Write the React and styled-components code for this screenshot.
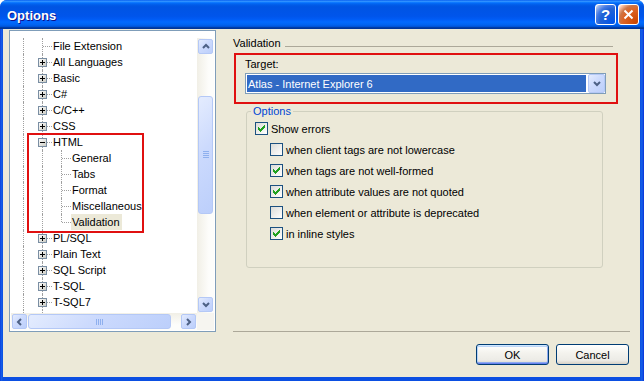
import React from 'react';
import styled, {createGlobalStyle} from 'styled-components';

const GlobalStyle = createGlobalStyle`
  html, body {
    margin: 0;
    padding: 0;
    background: #ffffff;
  }
  body {
    font-family: "Liberation Sans", Arial, sans-serif;
    font-size: 11px;
    color: #000;
  }
`;

const Window = styled.div`
  width: 644px;
  height: 381px;
  display: flex;
  flex-direction: column;
  background: linear-gradient(to right, #0831d9 0, #1660e8 1px, #0b4fe2 3px, #0b4fe2 640px, #1660e8 642px, #0831d9 644px);
  border-radius: 7px 7px 0 0;
  overflow: hidden;
`;

const TitleBar = styled.div`
  height: 29px;
  flex: none;
  display: flex;
  align-items: center;
  gap: 2px;
  padding: 0 5px 0 7px;
  background: linear-gradient(to bottom, #0058ee 0%, #3593ff 4%, #288eff 6%, #127dff 8%, #036ffc 10%, #0262ee 14%, #0057e5 20%, #0054e3 24%, #0055eb 56%, #005bf5 66%, #026afe 76%, #0062ef 86%, #0052d6 92%, #0040ab 94%, #003092 100%);
`;

const TitleText = styled.div`
  flex: 1;
  color: #fff;
  font: bold 13px "Liberation Sans", Arial, sans-serif;
  text-shadow: 1px 1px #0f1089;
  padding-top: 1px;
`;

const CaptionButton = styled.div`
  width: 21px;
  height: 21px;
  box-sizing: border-box;
  border: 1px solid #fff;
  border-radius: 3px;
  display: flex;
  align-items: center;
  justify-content: center;
  color: #fff;
  font: bold 15px "Liberation Sans", Arial, sans-serif;
  background: ${p => p.$kind === 'close'
    ? 'radial-gradient(circle at 90% 90%, #cc4600 0%, #dc6527 55%, #cd7546 70%, #ffccb2 90%, #fff 100%)'
    : 'radial-gradient(circle at 90% 90%, #0054e9 0%, #2263d5 55%, #4479e4 70%, #a3bbec 90%, #fff 100%)'};
`;

const Client = styled.div`
  flex: 1;
  display: flex;
  gap: 17px;
  margin: 0 4px 4px 3px;
  padding: 0 10px 0 6px;
  background: #ece9d8;
`;

/* ---------- tree ---------- */

const TreeFrame = styled.div`
  flex: none;
  width: 207px;
  height: 302px;
  margin-top: 1px;
  box-sizing: border-box;
  border: 1px solid #7f9db9;
  background: #fff;
  padding: 7px 1px 1px 1px;
  display: grid;
  grid-template-columns: 186px 17px;
  grid-template-rows: 275px 17px;
`;

const TreeViewport = styled.div`
  position: relative;
  overflow: hidden;
`;

const TreeRow = styled.div`
  display: flex;
  height: ${p => p.$height || 16}px;
  padding-left: 3px;
`;

const Cell = styled.div`
  position: relative;
  flex: none;
  width: 19px;

  &::before {
    content: '';
    position: absolute;
    left: 9px;
    top: 0;
    bottom: ${p => (p.$line === 'corner' ? '8px' : '0')};
    border-left: 1px dotted #a0a0a0;
  }

  &::after {
    content: '';
    display: ${p => (p.$line === 'pipe' ? 'none' : 'block')};
    position: absolute;
    left: 10px;
    right: 0;
    top: 8px;
    border-top: 1px dotted #a0a0a0;
  }
`;

const Expander = styled.svg`
  position: absolute;
  left: 5px;
  top: 4px;
  z-index: 1;
`;

const TreeLabel = styled.div`
  display: flex;
  align-items: center;
  padding: 0 2px 0 1px;
  white-space: nowrap;
  background: ${p => (p.$selected ? '#ece9d8' : 'transparent')};
`;

const Highlight = styled.div`
  position: absolute;
  left: 16px;
  top: 95px;
  width: 117px;
  height: 100px;
  box-sizing: border-box;
  border: 2px solid #e01010;
  pointer-events: none;
`;

/* ---------- scrollbars ---------- */

const VScroll = styled.div`
  display: flex;
  flex-direction: column;
  background: linear-gradient(to right, #f1efe6, #fdfdfb 70%);
`;

const HScroll = styled.div`
  display: flex;
  background: linear-gradient(to bottom, #f1efe6, #fdfdfb 70%);
`;

const ScrollCorner = styled.div`
  background: #f6f5f0;
`;

const xpBlue = `
  border: 1px solid #b4c8f6;
  background: linear-gradient(135deg, #e4ecfe 0%, #ccdafd 45%, #bccffb 100%);
`;

const ScrollButton = styled.div`
  flex: none;
  width: 15px;
  height: 15px;
  margin: 1px;
  box-sizing: border-box;
  border-radius: 2px;
  display: flex;
  align-items: center;
  justify-content: center;
  ${xpBlue}
`;

const Thumb = styled.div`
  flex: none;
  box-sizing: border-box;
  border-radius: 3px;
  display: flex;
  align-items: center;
  justify-content: center;
  ${xpBlue}
  ${p => (p.$vertical
    ? `width: 15px; margin: ${p.$offset}px 1px 0; height: ${p.$size}px;`
    : `height: 15px; margin: 1px 0 1px ${p.$offset}px; width: ${p.$size}px;`)}
`;

const Spacer = styled.div`
  flex: 1;
`;

function Arrow({dir}) {
  const paths = {
    up: 'M1 5L4 2L7 5',
    down: 'M1 2L4 5L7 2',
    left: 'M5 1L2 4L5 7',
    right: 'M2 1L5 4L2 7',
  };
  return (
    <svg width="8" height="8" viewBox="0 0 8 8">
      <path d={paths[dir]} fill="none" stroke="#4d6185" strokeWidth="2"/>
    </svg>
  );
}

function Grip({vertical}) {
  const lines = [0, 2, 4, 6];
  return (
    <svg width="8" height="8" viewBox="0 0 8 8" shapeRendering="crispEdges">
      {lines.map(o => vertical
        ? <rect key={o} x="1" y={o} width="6" height="1" fill="#8fb0ee"/>
        : <rect key={o} x={o} y="1" width="1" height="6" fill="#8fb0ee"/>)}
    </svg>
  );
}

function ExpandBox({open}) {
  return (
    <Expander width="9" height="9" viewBox="0 0 9 9" shapeRendering="crispEdges">
      <defs>
        <linearGradient id="exp" x1="0" y1="0" x2="1" y2="1">
          <stop offset="0" stopColor="#ffffff"/>
          <stop offset="1" stopColor="#c9c9c0"/>
        </linearGradient>
      </defs>
      <rect x="0.5" y="0.5" width="8" height="8" fill="url(#exp)" stroke="#7a8ea3"/>
      <rect x="2" y="4" width="5" height="1" fill="#000"/>
      {!open && <rect x="4" y="2" width="1" height="5" fill="#000"/>}
    </Expander>
  );
}

const treeRows = [
  {label: 'File Extension', lines: ['pipe', 'tee']},
  {label: 'All Languages', lines: ['pipe', 'tee'], box: 'plus'},
  {label: 'Basic', lines: ['pipe', 'tee'], box: 'plus'},
  {label: 'C#', lines: ['pipe', 'tee'], box: 'plus'},
  {label: 'C/C++', lines: ['pipe', 'tee'], box: 'plus'},
  {label: 'CSS', lines: ['pipe', 'tee'], box: 'plus'},
  {label: 'HTML', lines: ['pipe', 'tee'], box: 'minus'},
  {label: 'General', lines: ['pipe', 'pipe', 'tee']},
  {label: 'Tabs', lines: ['pipe', 'pipe', 'tee']},
  {label: 'Format', lines: ['pipe', 'pipe', 'tee']},
  {label: 'Miscellaneous', lines: ['pipe', 'pipe', 'tee']},
  {label: 'Validation', lines: ['pipe', 'pipe', 'corner'], selected: true},
  {label: 'PL/SQL', lines: ['pipe', 'tee'], box: 'plus'},
  {label: 'Plain Text', lines: ['pipe', 'tee'], box: 'plus'},
  {label: 'SQL Script', lines: ['pipe', 'tee'], box: 'plus'},
  {label: 'T-SQL', lines: ['pipe', 'tee'], box: 'plus'},
  {label: 'T-SQL7', lines: ['pipe', 'tee'], box: 'plus'},
];

function Tree() {
  return (
    <TreeFrame>
      <TreeViewport>
        {treeRows.map(row => (
          <TreeRow key={row.label}>
            {row.lines.map((line, i) => (
              <Cell key={i} $line={line}>
                {row.box && i === row.lines.length - 1 && <ExpandBox open={row.box === 'minus'}/>}
              </Cell>
            ))}
            <TreeLabel $selected={row.selected}>{row.label}</TreeLabel>
          </TreeRow>
        ))}
        {/* next row, scrolled below the fold: only its lines show */}
        <TreeRow $height={3}>
          <Cell $line="pipe"/>
          <Cell $line="pipe"/>
        </TreeRow>
        <Highlight/>
      </TreeViewport>
      <VScroll>
        <ScrollButton><Arrow dir="up"/></ScrollButton>
        <Thumb $vertical $offset={41} $size={118}><Grip vertical/></Thumb>
        <Spacer/>
        <ScrollButton><Arrow dir="down"/></ScrollButton>
      </VScroll>
      <HScroll>
        <ScrollButton><Arrow dir="left"/></ScrollButton>
        <Thumb $offset={0} $size={143}><Grip/></Thumb>
        <Spacer/>
        <ScrollButton><Arrow dir="right"/></ScrollButton>
      </HScroll>
      <ScrollCorner/>
    </TreeFrame>
  );
}

/* ---------- right side ---------- */

const RightColumn = styled.div`
  flex: none;
  width: 397px;
  display: flex;
  flex-direction: column;
`;

const SectionHeader = styled.div`
  display: flex;
  width: 380px;
  height: 13px;
  margin-top: 8px;
  line-height: 13px;
`;

const Rule = styled.div`
  flex: 1;
  align-self: flex-end;
  margin: 0 0 3px 4px;
  border-top: 1px solid #aca899;
`;

const TargetBox = styled.div`
  width: 384px;
  margin: 3px 0 0 1px;
  box-sizing: border-box;
  border: 2px solid #e01010;
  padding: 3px 10px 8px 9px;
`;

const FieldLabel = styled.div`
  line-height: 13px;
  margin-bottom: 2px;
`;

const Combo = styled.div`
  display: flex;
  height: 21px;
  box-sizing: border-box;
  border: 1px solid #7f9db9;
  background: #fff;
`;

const ComboValue = styled.div`
  flex: 1;
  margin: 1px 2px 1px 1px;
  padding-left: 1px;
  display: flex;
  align-items: center;
  background: #316ac5;
  color: #fff;
  white-space: nowrap;
`;

const ComboButton = styled.div`
  flex: none;
  width: 17px;
  box-sizing: border-box;
  border-radius: 2px;
  display: flex;
  align-items: center;
  justify-content: center;
  ${xpBlue}
`;

const GroupBox = styled.fieldset`
  width: 357px;
  height: 163px;
  margin: 1px 0 0 13px;
  padding: 0;
  box-sizing: border-box;
  border: 1px solid #d0d0bf;
  border-radius: 3px;
  min-inline-size: 0;
`;

const GroupLegend = styled.legend`
  margin-left: 4px;
  padding: 0 2px;
  line-height: 13px;
  color: #0046d5;
`;

const CheckList = styled.div`
  padding: 0 0 0 8px;
`;

const CheckRow = styled.div`
  display: flex;
  align-items: center;
  gap: 3px;
  height: 21px;
  padding-left: ${p => (p.$indent ? 15 : 0)}px;
  white-space: nowrap;
`;

const CheckBox = styled.div`
  flex: none;
  width: 13px;
  height: 13px;
  box-sizing: border-box;
  border: 1px solid #1c5180;
  padding: 2px;
  background: linear-gradient(135deg, #dcdcd7 0%, #ffffff 100%);
`;

const Footer = styled.div`
  margin-top: auto;
  border-top: 1px solid #aca899;
`;

const ButtonRow = styled.div`
  display: flex;
  justify-content: flex-end;
  gap: 7px;
  padding: 12px 1px 12px 0;
`;

const PushButton = styled.div`
  width: 73px;
  height: 21px;
  box-sizing: border-box;
  border: 1px solid #003c74;
  border-radius: 3px;
  display: flex;
  align-items: center;
  justify-content: center;
  background: linear-gradient(to bottom, #ffffff 0%, #f4f3ee 40%, #ecebe6 80%, #d6d0c5 100%);
  box-shadow: ${p => (p.$default
    ? 'inset 0 1px 0 #cee7ff, inset 0 -1px 0 #6982ee, inset 1px 0 0 #b8d4f8, inset -1px 0 0 #8da9f0, inset 0 2px 0 #bcd4f6, inset 0 -2px 0 #8caaf0'
    : 'none')};
`;

function Check({checked}) {
  return (
    <CheckBox>
      {checked && (
        <svg width="7" height="7" viewBox="0 0 7 7" shapeRendering="crispEdges" style={{display: 'block'}}>
          <path fill="#21a121" d="M6 0h1v1H6zM5 1h2v1H5zM0 2h1v1H0zM4 2h3v1H4zM0 3h2v1H0zM3 3h3v1H3zM0 4h5v1H0zM1 5h3v1H1zM2 6h1v1H2z"/>
        </svg>
      )}
    </CheckBox>
  );
}

const options = [
  {label: 'Show errors', checked: true},
  {label: 'when client tags are not lowercase', checked: false, indent: true},
  {label: 'when tags are not well-formed', checked: true, indent: true},
  {label: 'when attribute values are not quoted', checked: true, indent: true},
  {label: 'when element or attribute is deprecated', checked: false, indent: true},
  {label: 'in inline styles', checked: true, indent: true},
];

export default function App() {
  return (
    <>
      <GlobalStyle/>
      <Window>
        <TitleBar>
          <TitleText>Options</TitleText>
          <CaptionButton $kind="help">?</CaptionButton>
          <CaptionButton $kind="close">
            <svg width="11" height="11" viewBox="0 0 11 11">
              <path d="M1.5 1.5L9.5 9.5M9.5 1.5L1.5 9.5" stroke="#fff" strokeWidth="2"/>
            </svg>
          </CaptionButton>
        </TitleBar>
        <Client>
          <Tree/>
          <RightColumn>
            <SectionHeader>
              Validation
              <Rule/>
            </SectionHeader>
            <TargetBox>
              <FieldLabel>Target:</FieldLabel>
              <Combo>
                <ComboValue>Atlas - Internet Explorer 6</ComboValue>
                <ComboButton><Arrow dir="down"/></ComboButton>
              </Combo>
            </TargetBox>
            <GroupBox>
              <GroupLegend>Options</GroupLegend>
              <CheckList>
                {options.map(o => (
                  <CheckRow key={o.label} $indent={o.indent}>
                    <Check checked={o.checked}/>
                    {o.label}
                  </CheckRow>
                ))}
              </CheckList>
            </GroupBox>
            <Footer>
              <ButtonRow>
                <PushButton $default>OK</PushButton>
                <PushButton>Cancel</PushButton>
              </ButtonRow>
            </Footer>
          </RightColumn>
        </Client>
      </Window>
    </>
  );
}
